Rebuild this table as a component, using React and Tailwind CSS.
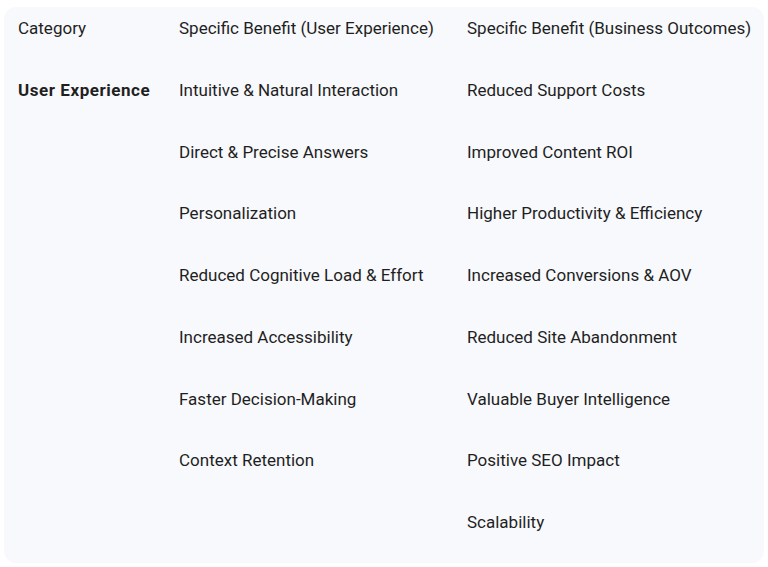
const rows = [
  ["User Experience", "Intuitive & Natural Interaction", "Reduced Support Costs"],
  ["", "Direct & Precise Answers", "Improved Content ROI"],
  ["", "Personalization", "Higher Productivity & Efficiency"],
  ["", "Reduced Cognitive Load & Effort", "Increased Conversions & AOV"],
  ["", "Increased Accessibility", "Reduced Site Abandonment"],
  ["", "Faster Decision-Making", "Valuable Buyer Intelligence"],
  ["", "Context Retention", "Positive SEO Impact"],
  ["", "", "Scalability"],
];

export default function App() {
  return (
    <div
      className="w-[768px] h-[567px] bg-white pt-[7px] px-[4px] text-[#1f1f1f]"
      style={{ fontFamily: "Roboto, 'Noto Sans', sans-serif" }}
    >
      <div className="bg-[#f8f9fc] rounded-xl h-[556px]">
        <div className="grid grid-cols-[161px_288px_1fr] text-[17px] leading-6">
          <div className="h-[61.75px] pt-[9px] pl-[14px]">Category</div>
          <div className="h-[61.75px] pt-[9px] pl-[14px]">Specific Benefit (User Experience)</div>
          <div className="h-[61.75px] pt-[9px] pl-[14px]">Specific Benefit (Business Outcomes)</div>
          {rows.map((r, i) => (
            <div key={i} className="contents">
              <div className="h-[61.75px] pt-[9px] pl-[14px] font-bold tracking-[0.55px]">{r[0]}</div>
              <div className="h-[61.75px] pt-[9px] pl-[14px]">{r[1]}</div>
              <div className="h-[61.75px] pt-[9px] pl-[14px]">{r[2]}</div>
            </div>
          ))}
        </div>
      </div>
    </div>
  );
}
